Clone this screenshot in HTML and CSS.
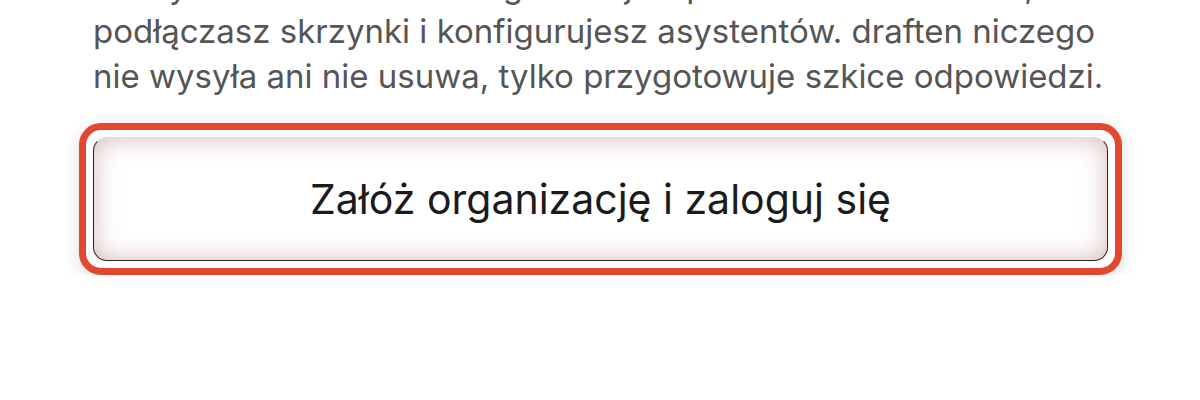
FILE: index.html
```html
<!DOCTYPE html>
<html lang="pl">
<head>
    <meta charset="UTF-8">
    <meta name="viewport" content="width=device-width, initial-scale=1.0">
    <title>draften - logowanie</title>
    <link rel="stylesheet" href="styles.css">
</head>
<body>
    <main class="onboarding">
        <p class="intro">
            Zaczynasz od konta dla organizacji w panelu administratora,<br>
            podłączasz skrzynki i konfigurujesz asystentów. draften niczego<br>
            nie wysyła ani nie usuwa, tylko przygotowuje szkice odpowiedzi.
        </p>

        <div class="focus-ring">
            <button type="button" class="start-btn">Załóż organizację i zaloguj się</button>
        </div>
    </main>
</body>
</html>
```

FILE: styles.css
```css
body {
    margin: 0;
    background: #ffffff;
    font-family: Inter, "Noto Sans", Arial, sans-serif;
}

.onboarding {
    width: 1015px;
    margin: -36px 0 0 93px;
}

.intro {
    margin: 0;
    font-size: 33px;
    line-height: 45px;
    color: #555555;
    white-space: nowrap;
}

/* focus ring drawn around the button */
.focus-ring {
    margin: 24px -14px 0 -14px;
    padding: 7px;
    background: #ffffff;
    border: 7px solid #e2472f;
    border-radius: 22px;
    box-shadow: 0 4px 18px rgba(0, 0, 0, 0.14);
}

.start-btn {
    display: block;
    width: 100%;
    height: 124px;
    padding: 0;
    font-family: inherit;
    font-size: 41px;
    font-weight: 400;
    color: #1b1b1b;
    background: #ffffff;
    border: 1.5px solid #2b1f1f;
    border-top-color: #e6d6d6;
    border-radius: 14px;
    box-shadow: inset 0 0 24px rgba(170, 120, 120, 0.5);
    cursor: pointer;
}
```
